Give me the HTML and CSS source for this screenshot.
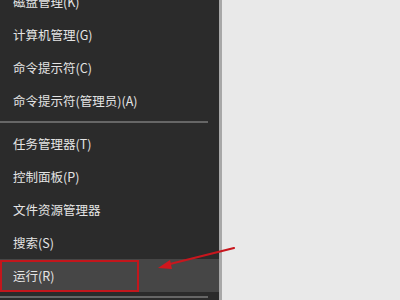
FILE: index.html
```html
<!DOCTYPE html>
<html lang="zh-CN">
<head>
    <meta charset="UTF-8">
    <title>快捷菜单</title>
    <link rel="stylesheet" href="styles.css">
</head>
<body>

<div class="menu">
    <div class="item">磁盘管理(K)</div>
    <div class="item">计算机管理(G)</div>
    <div class="item">命令提示符(C)</div>
    <div class="item">命令提示符(管理员)(A)</div>
    <div class="separator"></div>
    <div class="item">任务管理器(T)</div>
    <div class="item">控制面板(P)</div>
    <div class="item">文件资源管理器</div>
    <div class="item">搜索(S)</div>
    <div class="item active">
        运行(R)
        <span class="mark"></span>
    </div>
    <div class="separator"></div>
</div>

<svg class="arrow" width="80" height="30" viewBox="0 0 80 30">
    <line x1="78" y1="2" x2="10" y2="19" stroke="#c8161d" stroke-width="2.2" stroke-linecap="round"/>
    <polygon points="2,22 14,14 16,23" fill="#d0161d"/>
</svg>

</body>
</html>
```

FILE: styles.css
```css
body {
    margin: 0;
    height: 300px;
    overflow: hidden;
    background: #e9e9e9;
    font-family: "Noto Sans CJK SC", "Noto Sans", sans-serif;
    position: relative;
}

.menu {
    width: 219px;
    height: 300px;
    background: #2b2b2b;
    border-right: 3px solid #a8a8a8;
    overflow: hidden;
}

.menu .item:first-child {
    margin-top: -15px;
}

.item {
    position: relative;
    height: 33px;
    line-height: 33px;
    padding-left: 13px;
    font-size: 12.5px;
    color: #e4e4e4;
}

.item.active {
    background: #464646;
}

.separator {
    height: 2px;
    margin: 4px 11px 4px 0;
    background: #666;
}

.mark {
    position: absolute;
    left: 0;
    top: 1px;
    width: 135px;
    height: 28px;
    border: 2px solid #c3161c;
}

.arrow {
    position: absolute;
    left: 156px;
    top: 246px;
}
```
